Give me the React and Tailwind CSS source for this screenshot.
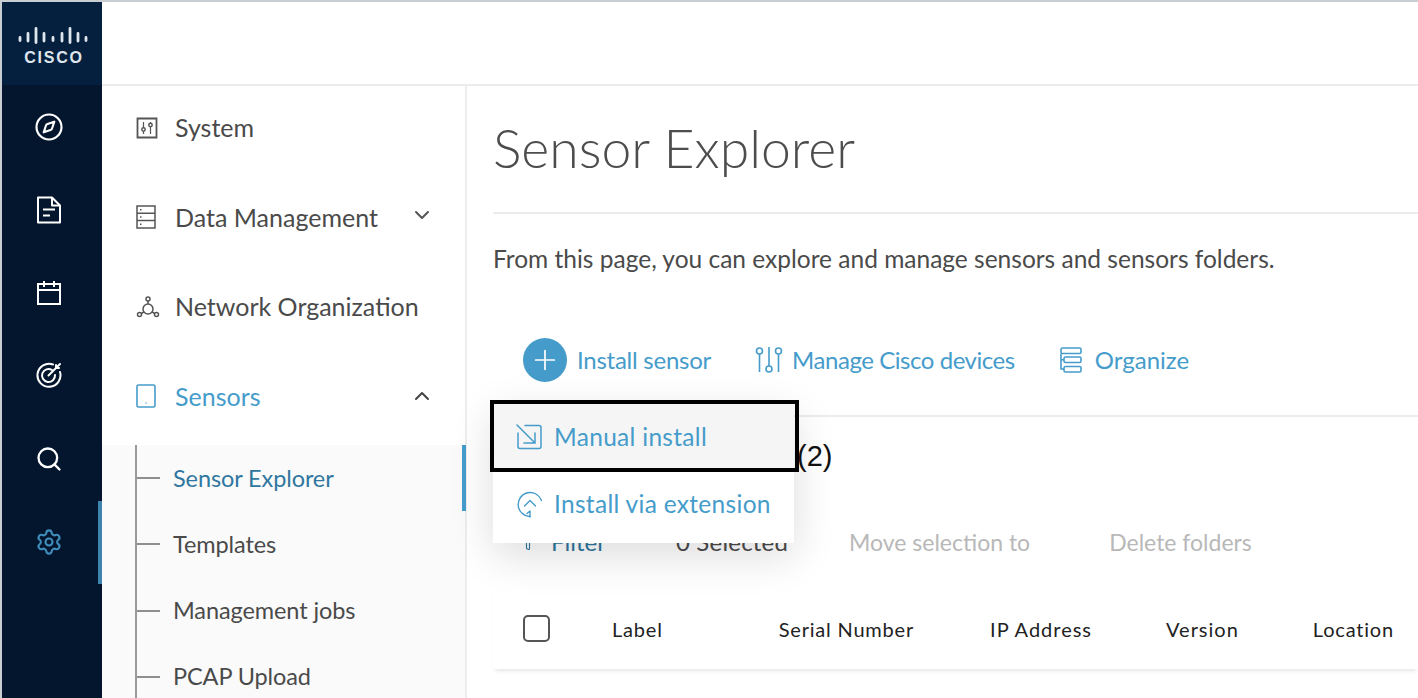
import React from 'react';
import { Compass, Search, Settings, ChevronDown, ChevronUp, Plus, Filter } from 'lucide-react';

const blue = 'text-[#459ccb]';

const CiscoBars = () => (
  <svg width="70" height="17" viewBox="0 0 70 17" fill="none" stroke="#dfe6ec" strokeWidth="2.800" strokeLinecap="round">
    <path d="M2 10.500v3M10 6.500v7.500M18 1.500v14M26 6.500v7.500M35 10.500v3M44 6.500v7.500M52 1.500v14M60 6.500v7.500M68 10.500v3" />
  </svg>
);

const DocIcon = () => (
  <svg width="26" height="28" viewBox="0 0 26 28" fill="none" stroke="white" strokeWidth="2" strokeLinejoin="round">
    <path d="M2 1.500h14l8 8v17H2z" />
    <path d="M16 1.500v8h8M7 13.500h12M7 19.500h7" />
  </svg>
);

const TargetIcon = () => (
  <svg width="26" height="26" viewBox="0 0 26 26" fill="none" stroke="white" strokeWidth="2" strokeLinecap="round">
    <path d="M17 2.500A11.500 11.500 0 1 0 24 10" />
    <path d="M16 8A6.500 6.500 0 1 0 19 13" />
    <path d="M12.500 13.500 24 2" />
    <path d="M20 3v3h3" />
  </svg>
);

const CalIcon = () => (
  <svg width="26" height="26" viewBox="0 0 26 26" fill="none" stroke="white" strokeWidth="2">
    <path d="M2 4h22v20H2zM2 10h22M8 1v6M18 1v6" />
  </svg>
);

const SystemIcon = () => (
  <svg width="22" height="22" viewBox="0 0 22 22" fill="none" stroke="#555" strokeWidth="1.500">
    <path d="M1.500 1.500h19v19h-19z" strokeWidth="1.800" />
    <path d="M7.500 5v12M14.500 5v12" strokeWidth="1.200" />
    <circle cx="7.500" cy="12.500" r="1.700" fill="white" />
    <circle cx="14.500" cy="8" r="1.700" fill="white" />
  </svg>
);

const ServerIcon = () => (
  <svg width="20" height="24" viewBox="0 0 20 24" fill="none" stroke="#555" strokeWidth="1.500">
    <path d="M1 1h18v22H1zM1 8.300h18M1 15.600h18" />
    <path d="M4 4.700h1.500M4 12h1.500M4 19.300h1.500" />
  </svg>
);

const NetworkIcon = () => (
  <svg width="24" height="22" viewBox="0 0 24 22" fill="none" stroke="#555" strokeWidth="1.500">
    <circle cx="12" cy="3" r="2" />
    <circle cx="3.500" cy="18.500" r="2" />
    <circle cx="20.500" cy="18.500" r="2" />
    <circle cx="12" cy="13" r="5" />
    <path d="M12 5v3M5.300 17.500l2.500-1.500M18.700 17.500l-2.500-1.500" />
  </svg>
);

const TabletIcon = () => (
  <svg width="20" height="24" viewBox="0 0 20 24" fill="none" stroke="#459ccb" strokeWidth="1.600">
    <rect x="1" y="1" width="18" height="22" rx="1.500" />
    <path d="M9.500 19h1" />
  </svg>
);

const ManageIcon = () => (
  <svg width="28" height="28" viewBox="0 0 28 28" fill="none" stroke="#459ccb" strokeWidth="1.600">
    <circle cx="4.500" cy="5" r="3" />
    <circle cx="14" cy="23" r="3" />
    <circle cx="23.500" cy="5" r="3" />
    <path d="M4.500 8v18M14 1v19M23.500 8v18" />
  </svg>
);

const OrganizeIcon = () => (
  <svg width="24" height="26" viewBox="0 0 24 26" fill="none" stroke="#459ccb" strokeWidth="1.600">
    <rect x="3" y="1" width="20" height="5.500" rx="1.500" />
    <rect x="6" y="10" width="17" height="5.500" rx="1.500" />
    <rect x="6" y="19.500" width="17" height="5.500" rx="1.500" />
    <path d="M3 6.500v15.500h3M3 12.800h3" />
  </svg>
);

const ManualIcon = () => (
  <svg width="26" height="26" viewBox="0 0 26 26" fill="none" stroke="#459ccb" strokeWidth="1.500" strokeLinecap="round">
    <path d="M2 9v13.500a2 2 0 0 0 2 2h19a2 2 0 0 0 2-2v-19a2 2 0 0 0-2-2H9" />
    <path d="M1 1l18 18M19 9v10H8" />
  </svg>
);

const ExtensionIcon = () => (
  <svg width="28" height="28" viewBox="0 0 28 28" fill="none" stroke="#459ccb" strokeWidth="1.400" strokeLinecap="round" strokeLinejoin="round">
    <path d="M25.500 10.500A12 12 0 1 0 14 26.500" />
    <path d="M8.500 16 14 10.500l5.500 5.500" />
    <path d="M14 27v-6l-3 2.500" />
  </svg>
);

const NavItem = ({ icon, label, active, chevron }) => (
  <div className={`flex h-[89.500px] items-center pl-[34px] pr-[31px] text-[25px] ${active ? blue : 'text-[#4a4a4a]'}`}>
    <span className="flex w-[39px] shrink-0 items-center">{icon}</span>
    <span className="flex-1">{label}</span>
    {chevron}
  </div>
);

const SubItem = ({ label, active }) => (
  <div className={`relative flex h-[66.300px] items-center pl-[35px] text-[23.500px] tracking-[-0.100px] ${active ? 'text-[#2f779f]' : 'text-[#4a4a4a]'}`}>
    <span className="mr-[13px] h-[2px] w-[23px] shrink-0 bg-[#8f8f8f]"></span>
    {label}
    {active && <span className="absolute right-[-1px] top-0 h-[66px] w-[4px] bg-[#459ccb]"></span>}
  </div>
);

export default function App() {
  return (
    <div className="flex h-[698px] w-[1418px] overflow-hidden border-t-2 border-l-2 border-[#c9ced2] bg-white font-['Lato','Open_Sans',sans-serif]">
      {/* dark rail */}
      <aside className="flex w-[100px] shrink-0 flex-col bg-[#04162d]">
        <div className="flex h-[83px] flex-col items-center bg-[#05203f] pl-[1px] pt-[25px]">
          <CiscoBars />
          <span className="mt-[5px] pl-[3px] font-['Liberation_Sans',sans-serif] text-[16px] leading-[18px] font-bold tracking-[1.800px] text-[#dfe6ec]">CISCO</span>
        </div>
        <div className="flex h-[84px] items-center justify-center pr-[6px]">
          <Compass size={30} color="white" strokeWidth={1.700} />
        </div>
        <div className="flex h-[83px] items-center justify-center pb-[2px] pr-[6px]"><DocIcon /></div>
        <div className="flex h-[83px] items-center justify-center pb-[2px] pr-[6px]"><CalIcon /></div>
        <div className="flex h-[83px] items-center justify-center pb-[4px] pr-[6px]"><TargetIcon /></div>
        <div className="flex h-[83px] items-center justify-center pb-[2px] pr-[6px]">
          <Search size={28} color="white" strokeWidth={2} />
        </div>
        <div className="flex h-[83px] items-center justify-center border-r-[4px] border-[#3f84ad] pb-[2px] pr-[2px]">
          <Settings size={28} color="#3f8dbb" strokeWidth={1.800} />
        </div>
      </aside>

      <div className="flex min-w-0 flex-1 flex-col">
        <header className="h-[84px] shrink-0 border-b-2 border-[#ececec] bg-white"></header>

        <div className="flex min-h-0 flex-1">
          {/* section nav */}
          <nav className="w-[365px] shrink-0 border-r-2 border-[#ededed]">
            <div className="-mt-[3px]">
              <NavItem icon={<SystemIcon />} label="System" />
              <NavItem
                icon={<ServerIcon />}
                label="Data Management"
                chevron={<ChevronDown size={24} color="#555" strokeWidth={2} className="mb-[4px]" />}
              />
              <NavItem icon={<NetworkIcon />} label="Network Organization" />
              <NavItem
                icon={<TabletIcon />}
                label="Sensors"
                active
                chevron={<ChevronUp size={24} color="#444" strokeWidth={2} />}
              />
            </div>
            <div className="relative mt-[4px] bg-[#fafafa]">
              <span className="absolute bottom-0 left-[33px] top-0 w-[2px] bg-[#9a9a9a]"></span>
              <SubItem label="Sensor Explorer" active />
              <SubItem label="Templates" />
              <SubItem label="Management jobs" />
              <SubItem label="PCAP Upload" />
            </div>
          </nav>

          {/* main */}
          <main className="min-w-0 flex-1 pl-[26px]">
            <h1 className="flex h-[128px] items-center border-b-2 border-[#ececec] pb-[4px] text-[53.500px] font-light text-[#4d4d4d]">
              Sensor Explorer
            </h1>
            <p className="mt-[29px] text-[24.500px] leading-[32px] text-[#4a4a4a]">
              From this page, you can explore and manage sensors and sensors folders.
            </p>

            <div className="relative mt-[57px] flex h-[85px] items-start border-b-2 border-[#ececec] pl-[30px] pt-[6px] text-[24px] tracking-[-0.400px] text-[#459ccb]">
              <span className="flex items-center">
                <span className="flex h-[44px] w-[44px] items-center justify-center rounded-full bg-[#459ccb]">
                  <Plus size={32} color="white" strokeWidth={1.300} />
                </span>
                <span className="ml-[10px] tracking-[-0.250px]">Install sensor</span>
              </span>
              <span className="ml-[44px] flex h-[44px] items-center">
                <ManageIcon />
                <span className="ml-[9px] tracking-[-0.450px]">Manage Cisco devices</span>
              </span>
              <span className="ml-[43px] flex h-[44px] items-center">
                <OrganizeIcon />
                <span className="ml-[13px] tracking-normal">Organize</span>
              </span>

              {/* install dropdown */}
              <div className="absolute left-0 top-[71px] z-10 w-[301px] bg-white text-[24.500px] tracking-[0.300px] shadow-[0_12px_40px_rgba(0,0,0,0.14)]">
                <div className="flex h-[68px] items-center bg-[#f5f5f5] pl-[23px]">
                  <ManualIcon />
                  <span className="ml-[12px]">Manual install</span>
                </div>
                <div className="flex h-[72px] items-center pb-[6px] pl-[23px]">
                  <ExtensionIcon />
                  <span className="ml-[10px]">Install via extension</span>
                </div>
                <span className="absolute left-[-3px] top-[-3px] h-[72px] w-[309px] border-[4px] border-black"></span>
              </div>
            </div>

            <div className="flex h-[80px] items-center pl-[304px] font-['Liberation_Sans',sans-serif] text-[29px] text-[#111]">
              (2)
            </div>

            <div className="mt-[24px] flex h-[42px] items-center pl-[26px] text-[24px]">
              <Filter size={18} color="#2f779f" strokeWidth={1.500} />
              <span className="ml-[14px] text-[#2f779f]">Filter</span>
              <span className="ml-[70px] tracking-[0.200px] text-[#4a4a4a]">0 Selected</span>
              <span className="ml-[61px] text-[23px] text-[#b8b8b8]">Move selection to</span>
              <span className="ml-[79px] text-[23px] text-[#b8b8b8]">Delete folders</span>
            </div>

            <div className="mt-[25px] flex h-[81px] items-center pl-[30px] text-[20px] tracking-[0.800px] text-[#222] shadow-[0_4px_4px_-2px_rgba(0,0,0,0.1)]">
              <span className="h-[27px] w-[27px] shrink-0 rounded-[5px] border-2 border-[#555]"></span>
              <span className="ml-[62px]">Label</span>
              <span className="ml-[116px]">Serial Number</span>
              <span className="ml-[76px] tracking-[1px]">IP Address</span>
              <span className="ml-[74px] tracking-[1px]">Version</span>
              <span className="ml-[74px]">Location</span>
            </div>
          </main>
        </div>
      </div>
    </div>
  );
}
